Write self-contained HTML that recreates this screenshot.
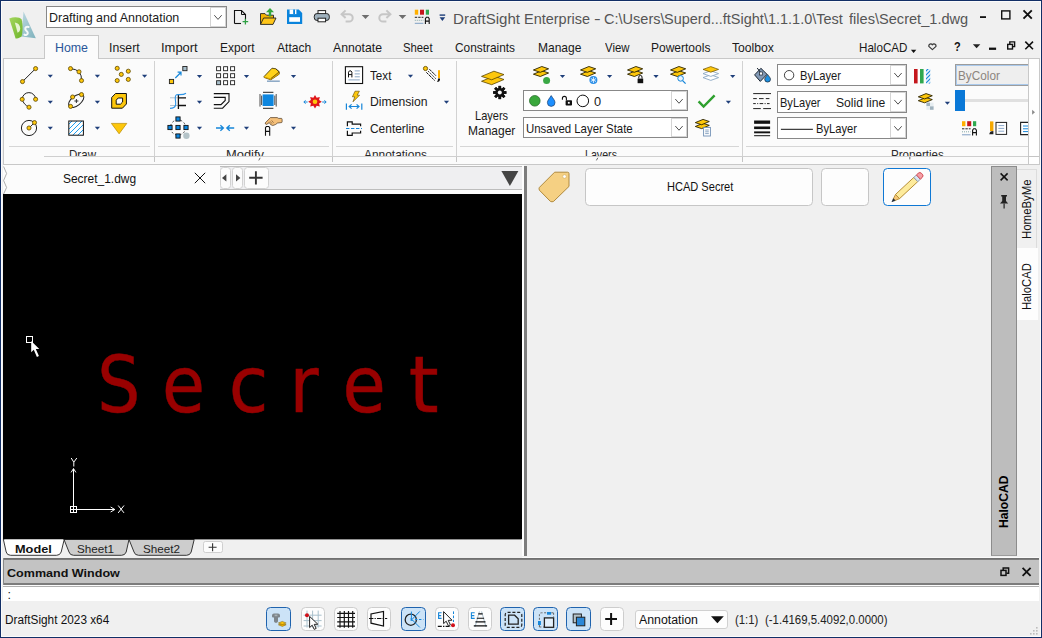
<!DOCTYPE html>
<html><head><meta charset="utf-8"><title>DraftSight Enterprise</title>
<style>
html,body{margin:0;padding:0;}
body{width:1042px;height:638px;overflow:hidden;background:#f0f0f0;position:relative;font-family:"Liberation Sans",sans-serif;}
#app{position:absolute;left:0;top:0;width:1042px;height:638px;overflow:hidden;}
#app div{position:absolute;box-sizing:border-box;}
#gfx{position:absolute;left:0;top:0;}
.t{position:absolute;white-space:nowrap;transform-origin:0 50%;display:block;}
</style></head><body><div id="app">
<div style="left:0px;top:0px;width:1042px;height:638px;background:#f0f0f0;"></div>
<div style="left:46px;top:6px;width:181px;height:22px;background:#fff;border:1px solid #888;"></div>
<div style="left:210px;top:7px;width:16px;height:20px;background:#fff;border:1px solid #d4d4d4;"></div>
<div style="left:44.2px;top:35.2px;width:54.5px;height:24px;background:#fbfbfb;border:1px solid #c8c8c8;border-bottom:none;"></div>
<div style="left:3px;top:58px;width:1037px;height:106.9px;background:#fbfbfb;border:1px solid #c8c8c8;"></div>
<div style="left:45.2px;top:57.6px;width:52.5px;height:2px;background:#fbfbfb;"></div>
<div style="left:1028px;top:59px;width:11px;height:104.9px;background:#fefefe;border-left:1px solid #c8c8c8;"></div>
<div style="left:154.0px;top:61px;width:1px;height:95px;background:#d2d2d2;"></div>
<div style="left:154.0px;top:157.4px;width:1px;height:4.2px;background:#c4c4c4;"></div>
<div style="left:332.0px;top:61px;width:1px;height:95px;background:#d2d2d2;"></div>
<div style="left:332.0px;top:157.4px;width:1px;height:4.2px;background:#c4c4c4;"></div>
<div style="left:456.0px;top:61px;width:1px;height:95px;background:#d2d2d2;"></div>
<div style="left:456.0px;top:157.4px;width:1px;height:4.2px;background:#c4c4c4;"></div>
<div style="left:742.0px;top:61px;width:1px;height:95px;background:#d2d2d2;"></div>
<div style="left:742.0px;top:157.4px;width:1px;height:4.2px;background:#c4c4c4;"></div>
<div style="left:9px;top:145.5px;width:141px;height:1px;background:#d6d6d6;"></div>
<div style="left:158px;top:145.5px;width:171px;height:1px;background:#d6d6d6;"></div>
<div style="left:336px;top:145.5px;width:116.5px;height:1px;background:#d6d6d6;"></div>
<div style="left:460px;top:145.5px;width:279px;height:1px;background:#d6d6d6;"></div>
<div style="left:746px;top:145.5px;width:282px;height:1px;background:#d6d6d6;"></div>
<div style="left:44px;top:156px;width:984px;height:1px;background:#cfcfcf;"></div>
<div style="left:523px;top:90.2px;width:165px;height:21.3px;background:#fff;border:1px solid #888;"></div>
<div style="left:671px;top:91.2px;width:16px;height:19.3px;background:#fff;border:1px solid #d4d4d4;"></div>
<div style="left:523px;top:117.2px;width:165px;height:21.2px;background:#fff;border:1px solid #888;"></div>
<div style="left:671px;top:118.2px;width:16px;height:19.2px;background:#fff;border:1px solid #d4d4d4;"></div>
<div style="left:777px;top:64px;width:130px;height:21.6px;background:#fff;border:1px solid #888;"></div>
<div style="left:890px;top:65px;width:16px;height:19.6px;background:#fff;border:1px solid #d4d4d4;"></div>
<div style="left:777px;top:91px;width:130px;height:21.5px;background:#fff;border:1px solid #888;"></div>
<div style="left:890px;top:92px;width:16px;height:19.5px;background:#fff;border:1px solid #d4d4d4;"></div>
<div style="left:777px;top:117.3px;width:130px;height:21.5px;background:#fff;border:1px solid #888;"></div>
<div style="left:890px;top:118.3px;width:16px;height:19.5px;background:#fff;border:1px solid #d4d4d4;"></div>
<div style="left:955.2px;top:64.4px;width:73px;height:21.4px;background:#eeeeee;border:1px solid #9c9c9c;border-right:none;box-shadow:inset 1px 1px 0 0 #a9c9ec, inset 0 -1px 0 0 #a9c9ec;"></div>
<div style="left:965px;top:98.6px;width:63px;height:3px;background:#e0e0e0;"></div>
<div style="left:955px;top:90px;width:10px;height:20.9px;background:#0a78d7;"></div>
<div style="left:3px;top:164.9px;width:519px;height:29.6px;background:#fcfcfc;"></div>
<div style="left:220px;top:165.5px;width:302px;height:24px;background:#efeff1;border-top:1px solid #bdbdbd;border-bottom:1px solid #bdbdbd;"></div>
<div style="left:219.5px;top:167px;width:11.2px;height:21.8px;background:#fcfcfc;border:1px solid #d2d2d2;border-radius:3.5px;"></div>
<div style="left:232px;top:167px;width:11.4px;height:21.8px;background:#fcfcfc;border:1px solid #d2d2d2;border-radius:3.5px;"></div>
<div style="left:243.8px;top:167px;width:25.6px;height:21.8px;background:#fcfcfc;border:1px solid #d2d2d2;border-radius:3.5px;"></div>
<div style="left:3px;top:194.4px;width:518.5px;height:345px;background:#000;"></div>
<div style="left:521.5px;top:164.5px;width:2.5px;height:391.5px;background:#fdfdfd;"></div>
<div style="left:524px;top:166px;width:2.7px;height:390px;background:#7d7d7d;"></div>
<div style="left:3px;top:557px;width:1035.6px;height:1px;background:#fafafa;"></div>
<div style="left:3px;top:539.5px;width:518.5px;height:19px;background:#f0f0f0;"></div>
<div style="left:202.5px;top:541px;width:20px;height:12.4px;background:#fcfcfc;border:1px solid #cfcfcf;border-radius:2.5px;"></div>
<div style="left:585px;top:168px;width:227.8px;height:38px;background:#fdfdfd;border:1px solid #c6c6c6;border-radius:4.5px;"></div>
<div style="left:821px;top:168px;width:48px;height:38px;background:#fdfdfd;border:1px solid #c6c6c6;border-radius:4.5px;"></div>
<div style="left:883px;top:168px;width:48px;height:38px;background:#fdfdfd;border:1.3px solid #0f78d4;border-radius:4.5px;"></div>
<div style="left:991px;top:166px;width:26.4px;height:389.6px;background:#bdbdbd;border:1px solid #8c8c8c;border-bottom:1px solid #9c9c9c;"></div>
<div style="left:1017.4px;top:169px;width:19.4px;height:79.6px;background:#f0f0f0;border:1px solid #dcdcdc;border-left:none;"></div>
<div style="left:1017.4px;top:248.4px;width:21px;height:71.2px;background:#fdfdfd;"></div>
<div style="left:3px;top:558px;width:1035.6px;height:2.6px;background:linear-gradient(#6a6a6a,#8e8e8e);"></div>
<div style="left:3px;top:560.4px;width:1035.6px;height:23.2px;background:#c3c3c3;"></div>
<div style="left:3px;top:583.4px;width:1035.6px;height:1.2px;background:#7c7c7c;"></div>
<div style="left:3px;top:584.6px;width:1035.6px;height:1.8px;background:#fcfcfc;"></div>
<div style="left:3px;top:586.3px;width:1035.6px;height:1px;background:#b0b0b0;"></div>
<div style="left:3px;top:587.3px;width:1035.6px;height:14.2px;background:#fff;"></div>
<div style="left:3px;top:558px;width:1px;height:27px;background:#8a8a8a;"></div>
<div style="left:266px;top:607px;width:25px;height:23.6px;background:#cce3f7;border:1.4px solid #1f63ae;border-radius:4.5px;"></div>
<div style="left:300.5px;top:607px;width:24px;height:23.6px;background:#fdfdfd;border:1px solid #cdcdcd;border-radius:4.5px;"></div>
<div style="left:333.8px;top:607px;width:23.8px;height:23.6px;background:#fdfdfd;border:1px solid #cdcdcd;border-radius:4.5px;"></div>
<div style="left:367px;top:607px;width:23.8px;height:23.6px;background:#fdfdfd;border:1px solid #cdcdcd;border-radius:4.5px;"></div>
<div style="left:401px;top:607px;width:25px;height:23.6px;background:#cce3f7;border:1.4px solid #1f63ae;border-radius:4.5px;"></div>
<div style="left:435px;top:607px;width:23.8px;height:23.6px;background:#fdfdfd;border:1px solid #cdcdcd;border-radius:4.5px;"></div>
<div style="left:468px;top:607px;width:24px;height:23.6px;background:#fdfdfd;border:1px solid #cdcdcd;border-radius:4.5px;"></div>
<div style="left:500px;top:607px;width:25px;height:23.6px;background:#cce3f7;border:1.4px solid #1f63ae;border-radius:4.5px;"></div>
<div style="left:533px;top:607px;width:25px;height:23.6px;background:#cce3f7;border:1.4px solid #1f63ae;border-radius:4.5px;"></div>
<div style="left:566px;top:607px;width:25px;height:23.6px;background:#cce3f7;border:1.4px solid #1f63ae;border-radius:4.5px;"></div>
<div style="left:600px;top:607px;width:23.8px;height:23.6px;background:#fdfdfd;border:1px solid #cdcdcd;border-radius:4.5px;"></div>
<div style="left:634.5px;top:609.5px;width:93px;height:19.4px;background:#fdfdfd;border:1px solid #d0d0d0;border-radius:3px;"></div>
<svg id="gfx" width="1042" height="638" viewBox="0 0 1042 638">
<polyline points="214.30,15.20 218.00,19.40 221.70,15.20" fill="none" stroke="#4a4a4a" stroke-width="0.95"/>
<defs><linearGradient id="lgT" x1="0" y1="0" x2="1" y2="1"><stop offset="0" stop-color="#bcd8e0"/><stop offset="1" stop-color="#7fb2bd"/></linearGradient>
<linearGradient id="lgG" x1="0" y1="0" x2="1" y2="1"><stop offset="0" stop-color="#a4d65e"/><stop offset="1" stop-color="#6fb52c"/></linearGradient></defs>
<polygon points="23.5,11.5 35.8,38.2 21.4,36.6" fill="url(#lgT)"/>
<path d="M9.3,18.4 C14,16.6 20,17 21.6,19.5 C23,24 22.8,32 21.6,36.4 C19,38 17,38.4 15.6,38.6 Z" fill="url(#lgG)"/>
<path d="M14.8,22.5 C18.4,23 20.2,25.5 20.2,28.6 C20.2,30.8 19.2,32.2 17.6,32.8 Z" fill="#e6f4d2"/>
<path d="M28.6,27 C26.6,26.2 25,27.4 25.3,29.2 C25.6,31 28,31.2 27.8,33.2 C27.6,35 25.6,35.4 24.4,34.6" fill="none" stroke="#f4f8f8" stroke-width="2" stroke-linecap="round"/>
<path d="M234.5,23.5 V10.5 H241.5 L245.5,14.5 V19" fill="none" stroke="#111" stroke-width="1.1"/><path d="M241.5,10.5 V14.5 H245.5" fill="none" stroke="#111" stroke-width="1"/><path d="M234.5,23.5 H241" stroke="#111" stroke-width="1.1"/>
<path d="M242.6,21.6 H248.2 M245.4,18.8 V24.4" stroke="#2ea043" stroke-width="1.3"/>
<path d="M260.5,24.3 V13.6 H265 L266.5,15.2 H273.5 V18" fill="#f5b400" stroke="#222" stroke-width="0.9"/>
<path d="M260.5,24.4 L263.6,18 H276 L273,24.4 Z" fill="#ffc61a" stroke="#222" stroke-width="0.9"/>
<path d="M270,8 L274,12.3 H271.2 V16.4 H268.8 V12.3 H266 Z" fill="#35a63c"/>
<path d="M287,9.5 H298.8 L302.2,12.9 V24 H287 Z" fill="#0a84dc"/><rect x="289.6" y="9.5" width="6.8" height="4.6" fill="#fff"/><rect x="293.2" y="9.5" width="1.8" height="4.6" fill="#0a84dc"/><rect x="289.2" y="17.2" width="10.8" height="4.6" fill="#fff"/>
<rect x="318" y="10.6" width="7.6" height="4" fill="#fff" stroke="#222" stroke-width="1"/>
<rect x="314.3" y="13.6" width="15" height="6.8" rx="2.6" fill="#9fb1bd" stroke="#222" stroke-width="1"/>
<rect x="318" y="18.2" width="7.6" height="3.6" fill="#fff" stroke="#222" stroke-width="1"/>
<path d="M342.4,14.2 H349 A3.6,3.6 0 0 1 349,21.6 H345.6" fill="none" stroke="#c6c6c6" stroke-width="2"/><path d="M345.6,10.4 L341.6,14.2 L345.6,18" fill="none" stroke="#c6c6c6" stroke-width="2"/>
<path d="M389.6,14.2 H383 A3.6,3.6 0 0 0 383,21.6 H386.4" fill="none" stroke="#c6c6c6" stroke-width="2"/><path d="M386.4,10.4 L390.4,14.2 L386.4,18" fill="none" stroke="#c6c6c6" stroke-width="2"/>
<polygon points="361.70,14.90 369.30,14.90 365.50,18.90" fill="#6e6e6e"/>
<polygon points="398.70,14.90 406.30,14.90 402.50,18.90" fill="#6e6e6e"/>
<g transform="translate(414.8,9.7)"><rect x="0" y="0" width="3.4" height="5" fill="#ffb000"/><rect x="5.2" y="0" width="4" height="5" fill="#c4161c"/><rect x="11" y="0" width="3.2" height="5" fill="#2fa84f"/>
<path d="M0,7.6 H8.6" stroke="#222" stroke-width="1" stroke-dasharray="2.4,1"/><path d="M0,10.6 H8.6" stroke="#8aa" stroke-width="1" stroke-dasharray="1,1"/><path d="M0,13.6 H8.6" stroke="#7f9fc4" stroke-width="1"/>
<path d="M10.6,14.4 V9 L11.6,7.6 H13.4 L14.4,9 V14.4 M10.6,11.4 H14.4" fill="none" stroke="#111" stroke-width="1.1"/></g>
<rect x="439.6" y="14.4" width="5.6" height="1.4" fill="#1f3f7a"/>
<polygon points="439.60,17.30 445.20,17.30 442.40,20.90" fill="#1f3f7a"/>
<rect x="980" y="16.2" width="6" height="1.8" fill="#111"/>
<rect x="1001.7" y="10.9" width="8.2" height="8" fill="none" stroke="#111" stroke-width="1.4"/>
<path d="M1023.5,10.4 L1031.8,18.7 M1031.8,10.4 L1023.5,18.7" stroke="#111" stroke-width="1.9"/>
<polygon points="910.90,49.80 916.30,49.80 913.60,53.00" fill="#111"/>
<path d="M932.4,49.6 L928.8,46.4 A2,2 0 0 1 932.4,44.8 A2,2 0 0 1 936,46.4 Z" fill="none" stroke="#3a3a3a" stroke-width="1.2" stroke-linejoin="round"/>
<polygon points="972.90,44.15 980.30,44.15 976.60,48.25" fill="#222"/>
<rect x="989" y="47.6" width="7.1" height="2.3" fill="#111"/>
<rect x="1007.7" y="44.4" width="4.8" height="4.6" fill="none" stroke="#111" stroke-width="1.4"/><path d="M1009.8,44 V41.9 H1014.6 V46.6 H1012.8" fill="none" stroke="#111" stroke-width="1.4"/>
<path d="M1025.3,41.6 L1033,49.3 M1033,41.6 L1025.3,49.3" stroke="#111" stroke-width="1.6"/>
<polygon points="1032.1,109.8 1035,112.3 1032.1,114.8" fill="#8a8a8a"/>
<path d="M22.5,81.6 L35.6,68.6" stroke="#222" stroke-width="1"/>
<circle cx="22.5" cy="81.6" r="2.05" fill="#fdc70c" stroke="#5c4600" stroke-width="0.8"/>
<circle cx="35.6" cy="68.6" r="2.05" fill="#fdc70c" stroke="#5c4600" stroke-width="0.8"/>
<path d="M70.5,68.6 Q76,69 79,71.8 Q82,75.5 81.5,80.6" fill="none" stroke="#222" stroke-width="1"/>
<circle cx="70.5" cy="68.6" r="2.05" fill="#fdc70c" stroke="#5c4600" stroke-width="0.8"/>
<circle cx="79" cy="71.8" r="2.05" fill="#fdc70c" stroke="#5c4600" stroke-width="0.8"/>
<circle cx="81.5" cy="80.6" r="2.05" fill="#fdc70c" stroke="#5c4600" stroke-width="0.8"/>
<circle cx="117.2" cy="68.3" r="2.05" fill="#fdc70c" stroke="#5c4600" stroke-width="0.8"/>
<circle cx="128.3" cy="71.2" r="2.05" fill="#fdc70c" stroke="#5c4600" stroke-width="0.8"/>
<circle cx="121.3" cy="74.4" r="2.05" fill="#fdc70c" stroke="#5c4600" stroke-width="0.8"/>
<circle cx="117.2" cy="80.6" r="2.05" fill="#fdc70c" stroke="#5c4600" stroke-width="0.8"/>
<circle cx="128.3" cy="79.4" r="2.05" fill="#fdc70c" stroke="#5c4600" stroke-width="0.8"/>
<path d="M22.2,99.3 A6.7,6.7 0 0 1 35.6,99.3" fill="none" stroke="#222" stroke-width="1"/><path d="M22.2,99.3 Q23.5,104.5 29,107.2" fill="none" stroke="#222" stroke-width="1"/>
<circle cx="22.2" cy="99.3" r="2.05" fill="#fdc70c" stroke="#5c4600" stroke-width="0.8"/>
<circle cx="35.6" cy="99.3" r="2.05" fill="#fdc70c" stroke="#5c4600" stroke-width="0.8"/>
<circle cx="29" cy="107.2" r="2.05" fill="#fdc70c" stroke="#5c4600" stroke-width="0.8"/>
<ellipse cx="76.2" cy="100.8" rx="9" ry="4.8" transform="rotate(-38 76.2 100.8)" fill="none" stroke="#222" stroke-width="1"/><path d="M74.4,101 H78.4 M76.4,99 V103" stroke="#222" stroke-width="0.9"/>
<circle cx="72.6" cy="97" r="2.05" fill="#fdc70c" stroke="#5c4600" stroke-width="0.8"/>
<circle cx="81.5" cy="94.6" r="2.05" fill="#fdc70c" stroke="#5c4600" stroke-width="0.8"/>
<circle cx="70.6" cy="106.4" r="2.05" fill="#fdc70c" stroke="#5c4600" stroke-width="0.8"/>
<path d="M115.5,93.5 H126.4 V104 L122.4,108.2 H111.7 V97.5 Z M118.2,98 L116.2,100.2 V104.2 H120.4 L122.6,102 V98 Z" fill="#fdc70c" stroke="#111" stroke-width="1" fill-rule="evenodd"/>
<circle cx="29" cy="128" r="7.6" fill="none" stroke="#222" stroke-width="1"/><path d="M29,128 L34.5,122.6" stroke="#222" stroke-width="1"/>
<circle cx="29" cy="128" r="2.05" fill="#fdc70c" stroke="#5c4600" stroke-width="0.8"/>
<circle cx="34.5" cy="122.6" r="2.05" fill="#fdc70c" stroke="#5c4600" stroke-width="0.8"/>
<clipPath id="hc"><rect x="68.8" y="121" width="14.6" height="14.2"/></clipPath><rect x="68.8" y="121" width="14.6" height="14.2" fill="#fff"/>
<g clip-path="url(#hc)" stroke="#1e9ef0" stroke-width="1"><path d="M66,127 L76,117 M66,132 L81,117 M66,137 L86,117 M71,137 L86,122 M76,137 L86,127 M81,137 L86,132"/></g>
<rect x="68.8" y="121" width="14.6" height="14.2" fill="none" stroke="#111" stroke-width="1"/>
<polygon points="111.4,123.4 126.8,123.4 119.1,133.8" fill="#fdc70c" stroke="#b88a00" stroke-width="0.7"/>
<polygon points="47.70,74.80 52.90,74.80 50.30,77.80" fill="#1f3f7a"/>
<polygon points="94.80,74.80 100.00,74.80 97.40,77.80" fill="#1f3f7a"/>
<polygon points="142.00,74.80 147.20,74.80 144.60,77.80" fill="#1f3f7a"/>
<polygon points="47.70,100.70 52.90,100.70 50.30,103.70" fill="#1f3f7a"/>
<polygon points="94.80,100.70 100.00,100.70 97.40,103.70" fill="#1f3f7a"/>
<polygon points="47.70,126.80 52.90,126.80 50.30,129.80" fill="#1f3f7a"/>
<polygon points="94.80,126.80 100.00,126.80 97.40,129.80" fill="#1f3f7a"/>
<rect x="169.4" y="79.4" width="4.2" height="4.2" fill="#fdc70c" stroke="#222" stroke-width="0.9"/><rect x="182.8" y="66.5" width="4.2" height="4.2" fill="#a9c0cc" stroke="#222" stroke-width="0.9"/>
<path d="M175.3,78 L180.8,72.5 M177.6,72.2 H181 V75.6" fill="none" stroke="#1686d9" stroke-width="1.2"/>
<rect x="216.6" y="66.7" width="4" height="4" fill="#fff" stroke="#222" stroke-width="0.9"/><rect x="223.6" y="66.7" width="4" height="4" fill="#fff" stroke="#222" stroke-width="0.9"/><rect x="230.6" y="66.7" width="4" height="4" fill="#fff" stroke="#222" stroke-width="0.9"/><rect x="216.6" y="73.7" width="4" height="4" fill="#fff" stroke="#222" stroke-width="0.9"/><rect x="223.6" y="73.7" width="4" height="4" fill="#fff" stroke="#222" stroke-width="0.9"/><rect x="230.6" y="73.7" width="4" height="4" fill="#fff" stroke="#222" stroke-width="0.9"/><rect x="216.6" y="80.7" width="4" height="4" fill="#a9c0cc" stroke="#222" stroke-width="0.9"/><rect x="223.6" y="80.7" width="4" height="4" fill="#fff" stroke="#222" stroke-width="0.9"/><rect x="230.6" y="80.7" width="4" height="4" fill="#fff" stroke="#222" stroke-width="0.9"/>
<path d="M264,76.6 L272,68.2 L275.8,68.8 L279.2,71.8 V74.2 L270.8,79.8 L264,77.4 Z" fill="#ffd21a" stroke="#3a2c00" stroke-width="0.8" stroke-linejoin="round"/>
<path d="M264,76.6 L270.8,78.6 L279.2,71.8 V74.2 L270.8,79.8 L264,77.4 Z" fill="#d9a300"/><path d="M270.8,78.6 L279.2,71.8 M275.8,68.8 L279.2,71.8" stroke="#3a2c00" stroke-width="0.6" fill="none"/>
<path d="M267,81.2 H279.8" stroke="#8aa7c4" stroke-width="1.5"/>
<path d="M170,97.8 H178 M170,105.5 H178" stroke="#a9bccb" stroke-width="0.9"/>
<path d="M178.4,94 V109 M178.4,97.8 H186 M178.4,105.5 H186" fill="none" stroke="#111" stroke-width="1.3"/>
<path d="M186,93.2 C183,95.4 179,94.2 176.6,94.8 C173.6,95.8 176.4,101.6 175.6,105 C175,107.6 172.6,108.4 170,108.4" fill="none" stroke="#2d94e6" stroke-width="1.1"/>
<path d="M213.8,93.6 H229 V101.6 L222.6,108.2 H213.8" fill="none" stroke="#111" stroke-width="1.1"/><path d="M213.8,97.4 H225.2 V100.4 L221,104.6 H213.8" fill="none" stroke="#111" stroke-width="1.1"/>
<rect x="262.6" y="94.4" width="11" height="11.6" fill="#0d86df"/><path d="M263,92.3 H273.4 M263,108.3 H273.4" stroke="#222" stroke-width="1"/><path d="M260,94 V106.6 M261.6,95.6 V105 M276.2,94 V106.6 M274.8,95.6 V105" stroke="#222" stroke-width="0.8"/>
<polygon points="315.00,95.00 316.68,97.73 319.81,96.99 319.07,100.12 321.80,101.80 319.07,103.48 319.81,106.61 316.68,105.87 315.00,108.60 313.32,105.87 310.19,106.61 310.93,103.48 308.20,101.80 310.93,100.12 310.19,96.99 313.32,97.73" fill="#e0161b"/><circle cx="315" cy="101.8" r="2.3" fill="#fdc70c"/>
<path d="M307.6,102 H304 M305.6,100.4 L303.8,102 L305.6,103.6" fill="none" stroke="#1686d9" stroke-width="1"/><path d="M322.2,102 H326 M324.4,100.4 L326.2,102 L324.4,103.6" fill="none" stroke="#1686d9" stroke-width="1"/>
<circle cx="178" cy="127.5" r="7.6" fill="none" stroke="#333" stroke-width="0.9" stroke-dasharray="2.2,2"/><rect x="175.9" y="116.9" width="4.2" height="4.2" fill="#0d86df" stroke="#111" stroke-width="0.9"/><rect x="167.9" y="125.4" width="4.2" height="4.2" fill="#0d86df" stroke="#111" stroke-width="0.9"/><rect x="175.9" y="125.4" width="4.2" height="4.2" fill="#0d86df" stroke="#111" stroke-width="0.9"/><rect x="183.9" y="125.4" width="4.2" height="4.2" fill="#0d86df" stroke="#111" stroke-width="0.9"/><rect x="175.9" y="133.9" width="4.2" height="4.2" fill="#0d86df" stroke="#111" stroke-width="0.9"/><circle cx="186.4" cy="135.8" r="3.2" fill="#b4c3c8"/>
<path d="M216,128 H223 M220.4,125.2 L223.4,128 L220.4,130.8" fill="none" stroke="#1686d9" stroke-width="1.3"/><path d="M234.2,128 H227.2 M229.8,125.2 L226.8,128 L229.8,130.8" fill="none" stroke="#1686d9" stroke-width="1.3"/>
<path d="M265.2,123 L270.4,117.6 H277.2 L278.6,118.4 H281.4 Q282.1,118.5 282.1,119.3 V121.9 Q282.1,122.6 281.3,122.6 L277.6,123 L275.4,124.6 L272.8,125.5 L270.6,124.6 L269.3,122.6 L266.6,124.4 Q265.2,124.4 265.2,123 Z" fill="#f5c07a" stroke="#4a3520" stroke-width="0.7" stroke-linejoin="round"/>
<path d="M270.2,121.4 L272,123.6 M271.6,120.4 L273.6,122.8" stroke="#6a4a2a" stroke-width="0.6"/>
<path d="M265.5,135.8 V127.6 L266.4,126.5 H268.8 L269.7,127.6 V135.8 M265.5,131.4 H269.7" fill="none" stroke="#111" stroke-width="1.1"/>
<polygon points="196.90,74.90 202.10,74.90 199.50,77.90" fill="#1f3f7a"/>
<polygon points="243.90,74.90 249.10,74.90 246.50,77.90" fill="#1f3f7a"/>
<polygon points="290.90,74.90 296.10,74.90 293.50,77.90" fill="#1f3f7a"/>
<polygon points="196.90,100.70 202.10,100.70 199.50,103.70" fill="#1f3f7a"/>
<polygon points="196.90,126.80 202.10,126.80 199.50,129.80" fill="#1f3f7a"/>
<polygon points="243.90,126.80 249.10,126.80 246.50,129.80" fill="#1f3f7a"/>
<polygon points="290.90,126.80 296.10,126.80 293.50,129.80" fill="#1f3f7a"/>
<rect x="345.4" y="66.7" width="17.2" height="16.8" fill="#fff" stroke="#111" stroke-width="1.1"/>
<path d="M348.5,77.4 V72.2 L349.4,70.9 H351 L351.9,72.2 V77.4 M348.5,74.6 H351.9" fill="none" stroke="#111" stroke-width="1"/>
<path d="M354.7,70.9 H359.8 M354.7,73.9 H359.8 M354.7,76.8 H359.8 M348.4,79.9 H359.8" stroke="#8aa7c4" stroke-width="1"/>
<polygon points="407.90,74.80 413.10,74.80 410.50,77.80" fill="#1f3f7a"/>
<path d="M429.4,69.2 L435.9,75.7 M426.3,72.3 L434.7,80.5" stroke="#111" stroke-width="1" stroke-dasharray="3,0.6"/><path d="M428.2,71.2 L435.7,78.6" stroke="#111" stroke-width="1" stroke-dasharray="1.6,1.4"/>
<circle cx="425.5" cy="68.5" r="2.1" fill="#fdc70c" stroke="#6b5200" stroke-width="0.9"/>
<rect x="438" y="70.2" width="2" height="7.9" fill="#ffb000"/><path d="M438,78.6 H440 V80 Q439.6,81.8 437,82 Q438.2,80.6 438,78.6 Z" fill="#111"/>
<path d="M355,91.2 H359.4 L357.2,95.2 H359.6 L353,101.8 L354.8,96.8 H352.4 Z" fill="#fdc70c" stroke="#5c4600" stroke-width="0.6"/>
<path d="M346.4,103.4 V109.8 M361.8,103.4 V109.8 M349.4,106.5 H358.8 M351.6,104.4 L349.2,106.5 L351.6,108.6 M356.6,104.4 L359,106.5 L356.6,108.6" fill="none" stroke="#1686d9" stroke-width="1.2"/>
<polygon points="443.90,100.80 449.10,100.80 446.50,103.80" fill="#1f3f7a"/>
<path d="M347.4,126.2 V121.9 H352.2 V124.2 H360.6 V126.2 M347.4,130.8 V135.4 H352.2 V133 H360.6 V130.8" fill="none" stroke="#111" stroke-width="1.2"/><path d="M346,128.5 H362" stroke="#1686d9" stroke-width="1.1" stroke-dasharray="3.4,1.6"/>
<polygon points="481.50,81.28 493.93,76.10 504.00,79.50 491.71,84.69" fill="#fdc70c" stroke="#5a4500" stroke-width="0.8" stroke-linejoin="round"/><polygon points="481.50,76.38 493.93,71.20 504.00,74.60 491.71,79.79" fill="#fdc70c" stroke="#5a4500" stroke-width="0.8" stroke-linejoin="round"/>
<rect x="498.5" y="85.9" width="2.6" height="13.2" fill="#111" transform="rotate(0 499.8 92.5)"/><rect x="498.5" y="85.9" width="2.6" height="13.2" fill="#111" transform="rotate(45 499.8 92.5)"/><rect x="498.5" y="85.9" width="2.6" height="13.2" fill="#111" transform="rotate(90 499.8 92.5)"/><rect x="498.5" y="85.9" width="2.6" height="13.2" fill="#111" transform="rotate(135 499.8 92.5)"/><rect x="498.5" y="85.9" width="2.6" height="13.2" fill="#111" transform="rotate(180 499.8 92.5)"/><rect x="498.5" y="85.9" width="2.6" height="13.2" fill="#111" transform="rotate(225 499.8 92.5)"/><rect x="498.5" y="85.9" width="2.6" height="13.2" fill="#111" transform="rotate(270 499.8 92.5)"/><rect x="498.5" y="85.9" width="2.6" height="13.2" fill="#111" transform="rotate(315 499.8 92.5)"/><circle cx="499.8" cy="92.5" r="4.6" fill="#111"/><circle cx="499.8" cy="92.5" r="2" fill="#fbfbfb"/>
<polygon points="533.40,74.20 541.80,70.70 548.60,73.00 540.30,76.50" fill="#fdc70c" stroke="#2a2200" stroke-width="0.9" stroke-linejoin="round"/><polygon points="533.40,70.00 541.80,66.50 548.60,68.80 540.30,72.30" fill="#fdc70c" stroke="#2a2200" stroke-width="0.9" stroke-linejoin="round"/>
<circle cx="546.6" cy="80.4" r="3.5" fill="#3aa845"/>
<polygon points="580.50,74.20 588.90,70.70 595.70,73.00 587.40,76.50" fill="#fdc70c" stroke="#2a2200" stroke-width="0.9" stroke-linejoin="round"/><polygon points="580.50,70.00 588.90,66.50 595.70,68.80 587.40,72.30" fill="#fdc70c" stroke="#2a2200" stroke-width="0.9" stroke-linejoin="round"/>
<circle cx="593.4" cy="80" r="4" fill="#2b8fe8"/><path d="M593.4,77 V83 M590.8,78.5 L596,81.5 M596,78.5 L590.8,81.5" stroke="#fff" stroke-width="0.8"/>
<polygon points="627.50,74.20 635.90,70.70 642.70,73.00 634.40,76.50" fill="#fdc70c" stroke="#2a2200" stroke-width="0.9" stroke-linejoin="round"/><polygon points="627.50,70.00 635.90,66.50 642.70,68.80 634.40,72.30" fill="#fdc70c" stroke="#2a2200" stroke-width="0.9" stroke-linejoin="round"/>
<rect x="637.6" y="78.6" width="5.6" height="4.6" fill="#111"/><path d="M638.8,78.6 V77 A1.6,1.6 0 0 1 642,77 V78.6" fill="none" stroke="#111" stroke-width="1"/>
<polygon points="670.50,74.20 678.90,70.70 685.70,73.00 677.40,76.50" fill="#fdc70c" stroke="#2a2200" stroke-width="0.9" stroke-linejoin="round"/><polygon points="670.50,70.00 678.90,66.50 685.70,68.80 677.40,72.30" fill="#fdc70c" stroke="#2a2200" stroke-width="0.9" stroke-linejoin="round"/>
<circle cx="680.6" cy="78.4" r="2.8" fill="#e8f3fc" stroke="#1686d9" stroke-width="1"/><path d="M682.6,80.6 L685.6,83.6" stroke="#1686d9" stroke-width="1.3"/>
<polygon points="703,77.6 710.8,74.8 718.6,77.6 710.8,80.4" fill="#fff" stroke="#8aa7c4" stroke-width="0.9"/><polygon points="703,73.6 710.8,70.8 718.6,73.6 710.8,76.4" fill="#fff" stroke="#8aa7c4" stroke-width="0.9"/><polygon points="703,69.4 710.8,66.6 718.6,69.4 710.8,72.2" fill="#fdc70c" stroke="#6b4f00" stroke-width="0.7"/>
<polygon points="559.90,74.90 565.10,74.90 562.50,77.90" fill="#1f3f7a"/>
<polygon points="607.00,74.90 612.20,74.90 609.60,77.90" fill="#1f3f7a"/>
<polygon points="653.40,74.90 658.60,74.90 656.00,77.90" fill="#1f3f7a"/>
<polygon points="730.10,74.90 735.30,74.90 732.70,77.90" fill="#1f3f7a"/>
<polygon points="725.80,100.80 731.00,100.80 728.40,103.80" fill="#1f3f7a"/>
<polyline points="675.30,99.05 679.00,103.25 682.70,99.05" fill="none" stroke="#4a4a4a" stroke-width="0.95"/>
<circle cx="534.8" cy="100.8" r="5.3" fill="#3aa83c" stroke="#2a6e2c" stroke-width="0.8"/>
<path d="M551.2,95.6 C553,98.6 555,100.4 555,102.6 A3.8,3.8 0 0 1 547.4,102.6 C547.4,100.4 549.4,98.6 551.2,95.6 Z" fill="#1e90ff" stroke="#1d3d6b" stroke-width="0.7"/>
<rect x="565.6" y="100.2" width="6.4" height="5.3" rx="0.8" fill="#111"/><rect x="567.9" y="101.9" width="1.8" height="1.8" fill="#fff"/><path d="M566.4,100.2 V98.4 A2,2 0 0 0 562.4,98.4 V99.8" fill="none" stroke="#111" stroke-width="1.1"/>
<circle cx="582.8" cy="100.9" r="5.8" fill="#fff" stroke="#111" stroke-width="1"/>
<polyline points="675.30,126.00 679.00,130.20 682.70,126.00" fill="none" stroke="#4a4a4a" stroke-width="0.95"/>
<path d="M698.6,101.4 L703.6,106.6 L714.6,95.4" fill="none" stroke="#2ea02e" stroke-width="2.4"/>
<polygon points="695.30,126.49 703.04,123.27 709.30,125.39 701.66,128.61" fill="#fdc70c" stroke="#2a2200" stroke-width="0.9" stroke-linejoin="round"/><polygon points="695.30,122.62 703.04,119.40 709.30,121.52 701.66,124.74" fill="#fdc70c" stroke="#2a2200" stroke-width="0.9" stroke-linejoin="round"/>
<rect x="703.6" y="127.4" width="6.8" height="8.6" fill="#fff" stroke="#6f8fb4" stroke-width="0.9"/><path d="M705.2,130 H708.8 M705.2,131.8 H708.8 M705.2,133.6 H708.8" stroke="#6f8fb4" stroke-width="0.8"/>
<path d="M754.6,74.9 L760.9,68.3 L767,74.3 L760.3,81.4 Z" fill="#8299b5" stroke="#1a2430" stroke-width="1" stroke-linejoin="round"/><path d="M757.2,68 L761,73" stroke="#1a2430" stroke-width="1"/><rect x="759.6" y="72" width="3" height="3" fill="#fff" stroke="#1a2430" stroke-width="0.7"/>
<path d="M767.6,74.4 C769,76.6 770.5,77.8 770.5,79.2 A2.9,2.9 0 0 1 764.7,79.2 C764.7,77.8 766.2,76.6 767.6,74.4 Z" fill="#1e90e0" stroke="#1a2430" stroke-width="0.7"/>
<polyline points="894.30,73.00 898.00,77.20 901.70,73.00" fill="none" stroke="#4a4a4a" stroke-width="0.95"/>
<circle cx="789.1" cy="75.2" r="4.7" fill="#fff" stroke="#444" stroke-width="1"/>
<path d="M753.2,93.6 H771" stroke="#222" stroke-width="1"/><path d="M753.2,98.6 H771" stroke="#222" stroke-width="1" stroke-dasharray="3.6,2.2,4.6,2.2,3.6,2"/><path d="M753.2,103.6 H771" stroke="#222" stroke-width="1" stroke-dasharray="2.6,1.4,1,1.4,3.6,1.4,1,1.4,2.6,2"/><path d="M753.2,108.6 H771" stroke="#222" stroke-width="1" stroke-dasharray="7.6,2.4,8,2"/>
<polyline points="894.30,99.95 898.00,104.15 901.70,99.95" fill="none" stroke="#4a4a4a" stroke-width="0.95"/>
<rect x="754.1" y="120.5" width="16" height="3.3" fill="#111"/><rect x="754.1" y="126.5" width="16" height="2.6" fill="#111"/><rect x="754.1" y="131.4" width="16" height="1.9" fill="#111"/><rect x="754.1" y="135.2" width="16" height="1" fill="#111"/>
<polyline points="894.30,126.25 898.00,130.45 901.70,126.25" fill="none" stroke="#4a4a4a" stroke-width="0.95"/>
<path d="M780.9,129.3 H812.9" stroke="#111" stroke-width="1"/>
<rect x="914" y="69" width="3.6" height="14.4" fill="#c4161c"/><rect x="920" y="69" width="3.6" height="14.4" fill="#2fa84f"/>
<clipPath id="cb"><rect x="926" y="69" width="4.2" height="14.4"/></clipPath><rect x="926" y="69" width="4.2" height="14.4" fill="#e4f2fd"/><g clip-path="url(#cb)" stroke="#1686d9" stroke-width="1.1"><path d="M924,73 L932,65 M924,77 L932,69 M924,81 L932,73 M924,85 L932,77 M924,89 L932,81"/></g>
<polygon points="918.30,100.69 926.04,97.47 932.30,99.59 924.66,102.81" fill="#fdc70c" stroke="#2a2200" stroke-width="0.9" stroke-linejoin="round"/><polygon points="918.30,96.82 926.04,93.60 932.30,95.72 924.66,98.94" fill="#fdc70c" stroke="#2a2200" stroke-width="0.9" stroke-linejoin="round"/>
<rect x="926.4" y="102.6" width="3.6" height="3.6" fill="#9fb1bd"/><rect x="930" y="106.2" width="3.6" height="3.6" fill="#9fb1bd"/><rect x="930" y="102.6" width="3.6" height="3.6" fill="#e6edf1"/><rect x="926.4" y="106.2" width="3.6" height="3.6" fill="#e6edf1"/>
<polygon points="944.80,101.80 950.00,101.80 947.40,104.80" fill="#1f3f7a"/>
<g transform="translate(962,121.2)"><rect x="0" y="0" width="3.4" height="5" fill="#ffb000"/><rect x="5.2" y="0" width="4" height="5" fill="#c4161c"/><rect x="11" y="0" width="3.2" height="5" fill="#2fa84f"/>
<path d="M0,7.6 H8.6" stroke="#222" stroke-width="1" stroke-dasharray="2.4,1"/><path d="M0,10.6 H8.6" stroke="#8aa" stroke-width="1" stroke-dasharray="1,1"/><path d="M0,13.6 H8.6" stroke="#7f9fc4" stroke-width="1"/>
<path d="M10.6,14.4 V9 L11.6,7.6 H13.4 L14.4,9 V14.4 M10.6,11.4 H14.4" fill="none" stroke="#111" stroke-width="1.1"/></g>
<rect x="996" y="122.4" width="10.6" height="12" fill="#fff" stroke="#222" stroke-width="1"/><path d="M998.4,125.6 H1004.2 M998.4,128.4 H1004.2 M998.4,131.2 H1004.2" stroke="#7f9fc4" stroke-width="0.9"/><rect x="990" y="121.4" width="3.4" height="9.6" fill="#f5a800"/><path d="M989.2,134.2 C990,131.6 991,131 993.4,131 V134.2 Z" fill="#222"/>
<path d="M1028,122.4 H1020.6 V134.6 H1028" fill="#fff" stroke="#222" stroke-width="1.1"/><path d="M1023,126 H1028 M1023,128.8 H1028 M1023,131.6 H1028" stroke="#1686d9" stroke-width="1"/>
<path d="M260.2,157.8 L258.8,160.4" stroke="#555" stroke-width="0.9"/><path d="M597.8,157.8 L596.4,160.4" stroke="#555" stroke-width="0.9"/><path d="M909.8,157 V159.4" stroke="#555" stroke-width="0.9"/>
<path d="M3.6,166.5 L6.6,173.5 L3.6,180.5 L6.6,187.5 L3.6,194" fill="none" stroke="#9a9a9a" stroke-width="0.8"/>
<path d="M194.8,172.8 L205.2,183.2 M205.2,172.8 L194.8,183.2" stroke="#111" stroke-width="1"/>
<polygon points="226.4,174.3 226.4,181.5 222,177.9" fill="#444"/><polygon points="236,174.3 236,181.5 240.4,177.9" fill="#444"/>
<path d="M249.2,177.8 H262.6 M255.9,171.2 V184.4" stroke="#333" stroke-width="1.9"/>
<polygon points="501.4,171 518.4,171 509.9,186" fill="#454545"/>
<rect x="26.5" y="336.5" width="6" height="6" fill="none" stroke="#fff" stroke-width="1"/>
<path d="M31.2,341 V352.2 L33.8,349.8 L36.9,356.9 L38.9,356 L35.8,349 H39.3 Z" fill="#fff"/>
<g stroke="#fff" stroke-width="1" fill="none"><rect x="70.5" y="506.5" width="6" height="6"/><path d="M73.5,506.5 V512.5 M70.5,509.5 H76.5"/>
<path d="M73.5,506.5 V468.6 M71.1,472.4 L73.5,468.6 L75.9,472.4"/><path d="M76.5,509.5 H114.8 M110.6,507 L114.8,509.5 L110.6,512"/>
<path d="M71.2,458 L73.8,462.2 L76.8,458 M73.8,462.2 V466.5"/><path d="M118.2,505.5 L124,512.9 M124,505.5 L118.2,512.9"/></g>
<path d="M64,539.5 L69,552 Q70,555.3 73.6,555.3 H121.6 Q125,555.3 126.2,552 L129,539.5 Z" fill="#cdcdcd" stroke="#222" stroke-width="0.9"/>
<path d="M129,539.5 L134,552 Q135,555.3 138.6,555.3 H186.6 Q190,555.3 191.2,552 L194.2,539.5 Z" fill="#cdcdcd" stroke="#222" stroke-width="0.9"/>
<path d="M3.4,539.5 L6.2,552 Q7,555.3 10.6,555.3 H56.6 Q60,555.3 61.2,552 L64.2,539.5 Z" fill="#fff" stroke="#222" stroke-width="0.9"/>
<rect x="3" y="538.3" width="518.5" height="1.1" fill="#000"/><rect x="4.2" y="539.3" width="59.2" height="1" fill="#fff"/>
<path d="M208.6,547.2 H216.6 M212.6,543.2 V551.2" stroke="#333" stroke-width="1.1"/>
<path d="M554.6,172.2 H567.6 Q569,172.2 569,173.6 V186.4 L553.6,201.4 Q552,202.2 550.4,201.4 L539.4,190.2 Q538.6,188.8 539.4,187.4 Z" fill="#f5d083" stroke="#b08a3e" stroke-width="1" stroke-linejoin="round"/>
<circle cx="564.5" cy="176.5" r="1.8" fill="#fff" stroke="#c9a55a" stroke-width="0.5"/>
<g transform="translate(907,187.7) rotate(-43)"><rect x="-13" y="-2.9" width="25" height="5.8" fill="#fdeb9c" stroke="#b38a32" stroke-width="0.9"/>
<rect x="12" y="-2.9" width="3.6" height="5.8" fill="#d9e7f3" stroke="#8593a8" stroke-width="0.8"/><path d="M15.6,-2.9 H18 Q20.4,-2.9 20.4,-0.6 V0.6 Q20.4,2.9 18,2.9 H15.6 Z" fill="#f4a0a6" stroke="#d0434e" stroke-width="0.9"/>
<path d="M-13,-2.9 L-18,-1 V1 L-13,2.9 Z" fill="#f7c877" stroke="#b38a32" stroke-width="0.8"/><path d="M-17.4,-1.2 L-20.6,0 L-17.4,1.2 Z" fill="#1d2733" stroke="#1d2733" stroke-width="0.6"/></g>
<path d="M1000.6,173.4 L1007.6,180.4 M1007.6,173.4 L1000.6,180.4" stroke="#111" stroke-width="1.5"/>
<path d="M1001.2,195 H1007 V196.4 H1006 V201 L1008.2,203.4 H1000 L1002.2,201 V196.4 H1001.2 Z" fill="#222"/><path d="M1004.1,203.4 V208.4" stroke="#222" stroke-width="1.2"/>
<rect x="1001" y="570.4" width="5" height="5" fill="none" stroke="#111" stroke-width="1.5"/><path d="M1003.2,570 V568 H1008.6 V573.2 H1006.4" fill="none" stroke="#111" stroke-width="1.5"/>
<path d="M1022.6,567.8 L1030.6,575.8 M1030.6,567.8 L1022.6,575.8" stroke="#111" stroke-width="1.8"/>
<polygon points="711,616.2 723.8,616.2 717.4,623.2" fill="#111"/>
<rect x="1036" y="630" width="1.6" height="1.6" fill="#bdbdbd"/><rect x="1033" y="633" width="1.6" height="1.6" fill="#bdbdbd"/><rect x="1036" y="633" width="1.6" height="1.6" fill="#bdbdbd"/><rect x="1030" y="633" width="1.6" height="1.6" fill="#bdbdbd"/><rect x="1033" y="630" width="1.6" height="1.6" fill="#bdbdbd"/><rect x="1036" y="627" width="1.6" height="1.6" fill="#bdbdbd"/>
<g fill="#990000" stroke="#990000" stroke-width="0.5" font-family="'DejaVu Sans', sans-serif" font-size="78"><text transform="translate(97.15,412.3) scale(0.8698,1)">S</text><text transform="translate(162.00,412.3) scale(0.8974,1)">e</text><text transform="translate(228.67,412.3) scale(0.9243,1)">c</text><text transform="translate(289.62,412.3) scale(0.9095,1)">r</text><text transform="translate(342.38,412.3) scale(0.9026,1)">e</text><text transform="translate(408.71,412.3) scale(0.9804,1)">t</text></g>
<path d="M272,616.6 V615.4 Q272,613.4 274,613.4 H278 Q280,613.4 280,615.4 V616.6 Q280,617.6 279,617.6 H278 V621.6 L277,622.8 H275 L274,621.6 V617.6 H273 Q272,617.6 272,616.6 Z" fill="#7d858b"/><rect x="274.6" y="614.6" width="2.8" height="1.6" fill="#a9b1b6"/>
<polygon points="278.4,624.8 282.3,623.2 286.2,624.8 282.3,626.4" fill="#f2b200" stroke="#7a5c00" stroke-width="0.5"/><polygon points="278.4,623 282.3,621.4 286.2,623 282.3,624.6" fill="#fbc20d" stroke="#7a5c00" stroke-width="0.5"/>
<g stroke="#a9c0cc" stroke-width="1"><path d="M307,610.6 V627.6 M312.6,610.6 V627.6 M318.2,610.6 V627.6 M303.6,615.2 H321.6 M303.6,620.6 H321.6 M303.6,626 H321.6"/></g>
<circle cx="307" cy="615.2" r="2" fill="#d0121b"/>
<path d="M309.6,616.4 V627.6 L312.2,625.2 L314.2,629.4 L316.2,628.4 L314.2,624.4 L317.8,624.2 Z" fill="#fff" stroke="#222" stroke-width="1"/>
<g stroke="#111" stroke-width="1.15"><path d="M340,611 V627.8 M344.3,611 V627.8 M348.5,611 V627.8 M352.7,611 V627.8 M337.2,613.3 H355 M337.2,617.5 H355 M337.2,621.9 H355 M337.2,626.1 H355"/></g>
<path d="M371,614 V623.2 L383.5,626 V611.4 Z" fill="none" stroke="#111" stroke-width="1.2"/><path d="M369,618.5 H387.2" stroke="#111" stroke-width="1.1" stroke-dasharray="4.4,1.2,1.2,1.2"/>
<circle cx="410.8" cy="619.7" r="5.6" fill="none" stroke="#222" stroke-width="1.3"/>
<g stroke="#1686d9" stroke-width="1"><path d="M412,619.4 L419.8,611.4 M412,619.6 L419.8,627.4 M411.4,611.6 V619"/><path d="M415,619.5 H423.4" stroke-dasharray="2.4,1.6"/></g><path d="M410.6,618 L413.4,620.4 L410.6,621" fill="#1686d9"/>
<path d="M441.6,612.8 H438.6 V618.4 H441.6 M438.6,615.6 H441.2" fill="none" stroke="#1686d9" stroke-width="1.1"/>
<path d="M453.5,611.4 V622" stroke="#1686d9" stroke-width="1" stroke-dasharray="2.6,1.6"/>
<path d="M437.8,626.4 H451" stroke="#111" stroke-width="1.1" stroke-dasharray="4,1.2,1.4,1.2"/>
<path d="M443.6,611.6 V623.6 L446.2,621.2 L448.4,625.8 L450.4,624.8 L448.2,620.4 L452,620.2 Z" fill="#fff" stroke="#222" stroke-width="1"/>
<circle cx="453" cy="625.2" r="2" fill="#d0121b"/>
<path d="M474.7,612.8 H471.4 V618.4 H474.7 M471.4,615.6 H474.3" fill="none" stroke="#1686d9" stroke-width="1.1"/>
<path d="M479.4,611.5 L475,627 M481.6,611.5 L486,627" stroke="#9db4c4" stroke-width="0.9"/>
<g stroke="#111" stroke-width="1.1"><path d="M478.3,613.9 H482.6 M476.8,618.2 H484.1 M475.4,621.9 H485.5 M473.8,625.9 H487.1"/></g>
<rect x="505.2" y="612.4" width="16.6" height="15" rx="2.4" fill="none" stroke="#222" stroke-width="1.2" stroke-dasharray="3,1.8"/>
<path d="M508.6,615.2 H514.6 L518.2,618.8 V624.2 H508.6 Z" fill="none" stroke="#222" stroke-width="1.3"/>
<path d="M539.4,627 V615 Q539.4,612.8 541.6,612.8 H553.6" fill="none" stroke="#666" stroke-width="1" stroke-dasharray="2,1.6"/><path d="M539.4,627 H544" stroke="#666" stroke-width="1" stroke-dasharray="2,1.6"/><path d="M553.6,612.8 V617" stroke="#666" stroke-width="1" stroke-dasharray="2,1.6"/>
<rect x="544.4" y="617.9" width="9.2" height="9.4" fill="#e3f0fb" stroke="#222" stroke-width="1.3"/>
<rect x="547" y="612" width="4.1" height="2.7" fill="#1686d9"/><rect x="538" y="621" width="2.9" height="4" fill="#1686d9"/>
<rect x="573.2" y="614" width="8.2" height="8.8" fill="#b4c3ca" stroke="#222" stroke-width="1"/><rect x="576.4" y="617.2" width="8.4" height="8.6" fill="#2b88d8" stroke="#222" stroke-width="1"/>
<path d="M605.2,619 H617 M611.1,613 V625" stroke="#111" stroke-width="2"/>
</svg>
<span class="t" style="left:48.50px;top:11.00px;font-size:13px;line-height:13px;color:#1a1a1a;font-weight:normal;font-family:'Liberation Sans', sans-serif;transform:scaleX(0.9587);">Drafting and Annotation</span>
<span class="t" style="left:452.79px;top:11.00px;font-size:15px;line-height:15px;color:#555;font-weight:normal;font-family:'Liberation Sans', sans-serif;transform:scaleX(1.0049);">DraftSight</span>
<span class="t" style="left:524.04px;top:11.00px;font-size:15px;line-height:15px;color:#555;font-weight:normal;font-family:'Liberation Sans', sans-serif;transform:scaleX(0.9649);">Enterprise</span>
<span class="t" style="left:594.20px;top:11.00px;font-size:15px;line-height:15px;color:#555;font-weight:normal;font-family:'Liberation Sans', sans-serif;transform:scaleX(1.3322);">-</span>
<span class="t" style="left:603.57px;top:11.00px;font-size:15px;line-height:15px;color:#555;font-weight:normal;font-family:'Liberation Sans', sans-serif;transform:scaleX(0.9691);">C:\Users\</span>
<span class="t" style="left:664.05px;top:11.00px;font-size:15px;line-height:15px;color:#555;font-weight:normal;font-family:'Liberation Sans', sans-serif;transform:scaleX(0.9662);">Superd...ftSight\1.1.1.0\Test</span>
<span class="t" style="left:848.95px;top:11.00px;font-size:15px;line-height:15px;color:#555;font-weight:normal;font-family:'Liberation Sans', sans-serif;transform:scaleX(0.9727);">files\Secret_1.dwg</span>
<span class="t" style="left:54.81px;top:40.80px;font-size:13px;line-height:13px;color:#2a5699;font-weight:normal;font-family:'Liberation Sans', sans-serif;transform:scaleX(0.9518);">Home</span>
<span class="t" style="left:108.90px;top:40.80px;font-size:13px;line-height:13px;color:#1a1a1a;font-weight:normal;font-family:'Liberation Sans', sans-serif;transform:scaleX(0.9415);">Insert</span>
<span class="t" style="left:160.83px;top:40.80px;font-size:13px;line-height:13px;color:#1a1a1a;font-weight:normal;font-family:'Liberation Sans', sans-serif;transform:scaleX(0.9966);">Import</span>
<span class="t" style="left:219.54px;top:40.80px;font-size:13px;line-height:13px;color:#1a1a1a;font-weight:normal;font-family:'Liberation Sans', sans-serif;transform:scaleX(0.9186);">Export</span>
<span class="t" style="left:276.50px;top:40.80px;font-size:13px;line-height:13px;color:#1a1a1a;font-weight:normal;font-family:'Liberation Sans', sans-serif;transform:scaleX(0.9285);">Attach</span>
<span class="t" style="left:333.00px;top:40.80px;font-size:13px;line-height:13px;color:#1a1a1a;font-weight:normal;font-family:'Liberation Sans', sans-serif;transform:scaleX(0.9421);">Annotate</span>
<span class="t" style="left:403.49px;top:40.80px;font-size:13px;line-height:13px;color:#1a1a1a;font-weight:normal;font-family:'Liberation Sans', sans-serif;transform:scaleX(0.8694);">Sheet</span>
<span class="t" style="left:455.41px;top:40.80px;font-size:13px;line-height:13px;color:#1a1a1a;font-weight:normal;font-family:'Liberation Sans', sans-serif;transform:scaleX(0.9123);">Constraints</span>
<span class="t" style="left:538.04px;top:40.80px;font-size:13px;line-height:13px;color:#1a1a1a;font-weight:normal;font-family:'Liberation Sans', sans-serif;transform:scaleX(0.9243);">Manage</span>
<span class="t" style="left:604.50px;top:40.80px;font-size:13px;line-height:13px;color:#1a1a1a;font-weight:normal;font-family:'Liberation Sans', sans-serif;transform:scaleX(0.8763);">View</span>
<span class="t" style="left:651.04px;top:40.80px;font-size:13px;line-height:13px;color:#1a1a1a;font-weight:normal;font-family:'Liberation Sans', sans-serif;transform:scaleX(0.9237);">Powertools</span>
<span class="t" style="left:732.26px;top:40.80px;font-size:13px;line-height:13px;color:#1a1a1a;font-weight:normal;font-family:'Liberation Sans', sans-serif;transform:scaleX(0.9347);">Toolbox</span>
<span class="t" style="left:859.07px;top:40.80px;font-size:13px;line-height:13px;color:#1a1a1a;font-weight:normal;font-family:'Liberation Sans', sans-serif;transform:scaleX(0.8949);">HaloCAD</span>
<span class="t" style="left:954.11px;top:40.20px;font-size:13px;line-height:13px;color:#111;font-weight:bold;font-family:'Liberation Sans', sans-serif;transform:scaleX(0.8434);">?</span>
<span class="t" style="left:369.77px;top:69.00px;font-size:13px;line-height:13px;color:#1a1a1a;font-weight:normal;font-family:'Liberation Sans', sans-serif;transform:scaleX(0.8967);">Text</span>
<span class="t" style="left:369.53px;top:95.00px;font-size:13px;line-height:13px;color:#1a1a1a;font-weight:normal;font-family:'Liberation Sans', sans-serif;transform:scaleX(0.9361);">Dimension</span>
<span class="t" style="left:369.70px;top:122.00px;font-size:13px;line-height:13px;color:#1a1a1a;font-weight:normal;font-family:'Liberation Sans', sans-serif;transform:scaleX(0.9181);">Centerline</span>
<span class="t" style="left:475.32px;top:108.60px;font-size:13px;line-height:13px;color:#1a1a1a;font-weight:normal;font-family:'Liberation Sans', sans-serif;transform:scaleX(0.8476);">Layers</span>
<span class="t" style="left:468.04px;top:124.40px;font-size:13px;line-height:13px;color:#1a1a1a;font-weight:normal;font-family:'Liberation Sans', sans-serif;transform:scaleX(0.9218);">Manager</span>
<span class="t" style="left:593.75px;top:94.80px;font-size:13px;line-height:13px;color:#1a1a1a;font-weight:normal;font-family:'Liberation Sans', sans-serif;transform:scaleX(0.9828);">0</span>
<span class="t" style="left:525.74px;top:122.00px;font-size:13px;line-height:13px;color:#1a1a1a;font-weight:normal;font-family:'Liberation Sans', sans-serif;transform:scaleX(0.8789);">Unsaved Layer State</span>
<span class="t" style="left:799.81px;top:69.00px;font-size:13px;line-height:13px;color:#1a1a1a;font-weight:normal;font-family:'Liberation Sans', sans-serif;transform:scaleX(0.8583);">ByLayer</span>
<span class="t" style="left:780.02px;top:96.00px;font-size:13px;line-height:13px;color:#1a1a1a;font-weight:normal;font-family:'Liberation Sans', sans-serif;transform:scaleX(0.8497);">ByLayer</span>
<span class="t" style="left:836.45px;top:96.00px;font-size:13px;line-height:13px;color:#1a1a1a;font-weight:normal;font-family:'Liberation Sans', sans-serif;transform:scaleX(0.9338);">Solid line</span>
<span class="t" style="left:815.71px;top:121.80px;font-size:13px;line-height:13px;color:#1a1a1a;font-weight:normal;font-family:'Liberation Sans', sans-serif;transform:scaleX(0.8583);">ByLayer</span>
<span class="t" style="left:957.86px;top:69.00px;font-size:13px;line-height:13px;color:#8c857e;font-weight:normal;font-family:'Liberation Sans', sans-serif;transform:scaleX(0.9055);">ByColor</span>
<span class="t" style="left:63.46px;top:172.72px;font-size:12.5px;line-height:12.5px;color:#111;font-weight:normal;font-family:'Liberation Sans', sans-serif;transform:scaleX(0.9557);">Secret_1.dwg</span>
<span class="t" style="left:15.07px;top:543.89px;font-size:11px;line-height:11px;color:#111;font-weight:bold;font-family:'Liberation Sans', sans-serif;transform:scaleX(1.1580);">Model</span>
<span class="t" style="left:77.47px;top:543.89px;font-size:11px;line-height:11px;color:#222;font-weight:normal;font-family:'Liberation Sans', sans-serif;transform:scaleX(1.0623);">Sheet1</span>
<span class="t" style="left:143.47px;top:543.89px;font-size:11px;line-height:11px;color:#222;font-weight:normal;font-family:'Liberation Sans', sans-serif;transform:scaleX(1.0623);">Sheet2</span>
<span class="t" style="left:666.72px;top:180.84px;font-size:12px;line-height:12px;color:#111;font-weight:normal;font-family:'Liberation Sans', sans-serif;transform:scaleX(0.9205);">HCAD Secret</span>
<span class="t" style="left:1026.80px;top:238.70px;font-size:12.5px;line-height:12.5px;color:#111;font-weight:normal;transform-origin:0 0;transform:rotate(-90deg) scaleX(0.9143) translateY(-50%);">HomeByMe</span>
<span class="t" style="left:1026.80px;top:309.80px;font-size:12.5px;line-height:12.5px;color:#111;font-weight:normal;transform-origin:0 0;transform:rotate(-90deg) scaleX(0.8981) translateY(-50%);">HaloCAD</span>
<span class="t" style="left:1004.20px;top:528.20px;font-size:12.5px;line-height:12.5px;color:#000;font-weight:bold;transform-origin:0 0;transform:rotate(-90deg) scaleX(0.9673) translateY(-50%);">HaloCAD</span>
<span class="t" style="left:7.10px;top:567.59px;font-size:11px;line-height:11px;color:#111;font-weight:bold;font-family:'Liberation Sans', sans-serif;transform:scaleX(1.1409);">Command Window</span>
<span class="t" style="left:7.40px;top:588.82px;font-size:12.5px;line-height:12.5px;color:#222;font-weight:normal;font-family:'Liberation Sans', sans-serif;transform:scaleX(1.0000);">:</span>
<span class="t" style="left:4.86px;top:613.84px;font-size:12px;line-height:12px;color:#111;font-weight:normal;font-family:'Liberation Sans', sans-serif;transform:scaleX(0.9826);">DraftSight 2023 x64</span>
<span class="t" style="left:638.80px;top:613.84px;font-size:12px;line-height:12px;color:#111;font-weight:normal;font-family:'Liberation Sans', sans-serif;transform:scaleX(1.0274);">Annotation</span>
<span class="t" style="left:734.82px;top:613.84px;font-size:12px;line-height:12px;color:#222;font-weight:normal;font-family:'Liberation Sans', sans-serif;transform:scaleX(0.9445);">(1:1)</span>
<span class="t" style="left:765.11px;top:613.84px;font-size:12px;line-height:12px;color:#222;font-weight:normal;font-family:'Liberation Sans', sans-serif;transform:scaleX(0.9515);">(-1.4169,5.4092,0.0000)</span>
<div style="left:1028px;top:156px;width:11px;height:1px;background:#c4c4c4;"></div>
<div style="left:66.5px;top:146.5px;width:33.0px;height:9.5px;overflow:hidden;"><span class="t" style="left:2px;top:1.2px;font-size:13px;line-height:13px;color:#2a2a2a;transform:scaleX(0.8898);">Draw</span></div>
<div style="left:224px;top:146.5px;width:44px;height:9.5px;overflow:hidden;"><span class="t" style="left:2px;top:1.2px;font-size:13px;line-height:13px;color:#2a2a2a;transform:scaleX(0.9922);">Modify</span></div>
<div style="left:362px;top:146.5px;width:69px;height:9.5px;overflow:hidden;"><span class="t" style="left:2px;top:1.2px;font-size:13px;line-height:13px;color:#2a2a2a;transform:scaleX(0.9174);">Annotations</span></div>
<div style="left:582.5px;top:146.5px;width:38.0px;height:9.5px;overflow:hidden;"><span class="t" style="left:2px;top:1.2px;font-size:13px;line-height:13px;color:#2a2a2a;transform:scaleX(0.8199);">Layers</span></div>
<div style="left:888.6px;top:146.5px;width:58.799999999999955px;height:9.5px;overflow:hidden;"><span class="t" style="left:2px;top:1.2px;font-size:13px;line-height:13px;color:#2a2a2a;transform:scaleX(0.8911);">Properties</span></div>
<div style="left:0;top:0;width:1042px;height:638px;border:1px solid #122f66;box-shadow:inset 0 0 0 1px #fbfbfb;pointer-events:none;"></div>
</div></body></html>
